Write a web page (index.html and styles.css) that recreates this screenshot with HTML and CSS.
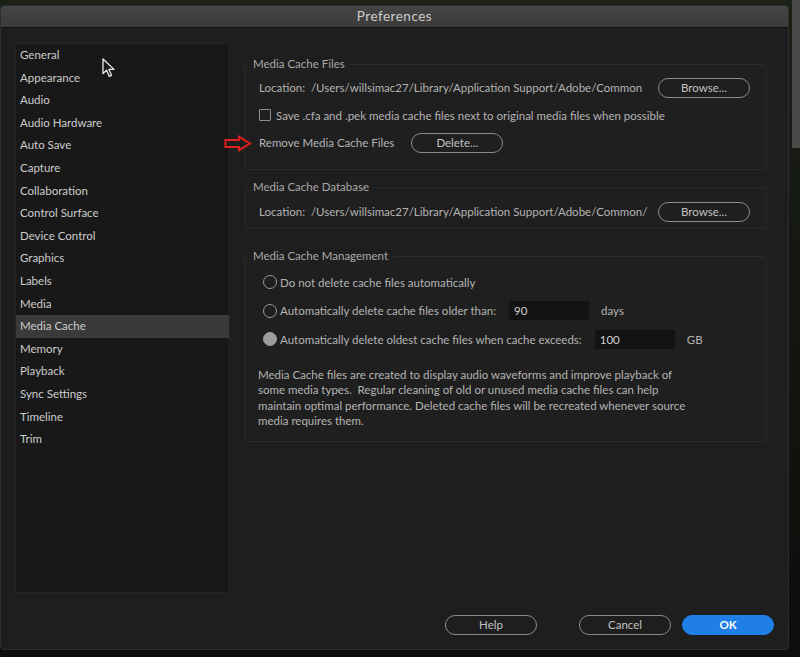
FILE: index.html
```html
<!DOCTYPE html>
<html lang="en">
<head>
<meta charset="utf-8">
<title>Preferences</title>
<link rel="stylesheet" href="styles.css">
</head>
<body>
<div class="desktop">
  <div class="window">
    <div class="titlebar">Preferences</div>
    <div class="content">
      <ul class="sidebar">
        <li>General</li>
        <li>Appearance</li>
        <li>Audio</li>
        <li>Audio Hardware</li>
        <li>Auto Save</li>
        <li>Capture</li>
        <li>Collaboration</li>
        <li>Control Surface</li>
        <li>Device Control</li>
        <li>Graphics</li>
        <li>Labels</li>
        <li>Media</li>
        <li class="selected">Media Cache</li>
        <li>Memory</li>
        <li>Playback</li>
        <li>Sync Settings</li>
        <li>Timeline</li>
        <li>Trim</li>
      </ul>
      <div class="panel">
        <fieldset class="group group-files">
          <legend>Media Cache Files</legend>
          <div class="row spread">
            <span>Location:&nbsp; /Users/willsimac27/Library/Application Support/Adobe/Common</span>
            <button class="btn">Browse...</button>
          </div>
          <div class="row">
            <span class="checkbox"></span>
            <span>Save .cfa and .pek media cache files next to original media files when possible</span>
          </div>
          <div class="row remove-row">
            <svg class="pointer-arrow" width="28" height="17" viewBox="0 0 28 17">
              <path d="M1.5 5 H15 V1.8 L26 8.5 L15 15.2 V12 H1.5 Z" fill="none" stroke="#e0201c" stroke-width="2" stroke-linejoin="miter"/>
            </svg>
            <span>Remove Media Cache Files</span>
            <button class="btn">Delete...</button>
          </div>
        </fieldset>

        <fieldset class="group group-db">
          <legend>Media Cache Database</legend>
          <div class="row spread">
            <span>Location:&nbsp; /Users/willsimac27/Library/Application Support/Adobe/Common/</span>
            <button class="btn">Browse...</button>
          </div>
        </fieldset>

        <fieldset class="group group-manage">
          <legend>Media Cache Management</legend>
          <div class="row radio-row">
            <span class="radio"></span>
            <span>Do not delete cache files automatically</span>
          </div>
          <div class="row radio-row">
            <span class="radio"></span>
            <span class="opt-label">Automatically delete cache files older than:</span>
            <span class="field days">90</span>
            <span class="unit">days</span>
          </div>
          <div class="row radio-row">
            <span class="radio checked"></span>
            <span class="opt-label">Automatically delete oldest cache files when cache exceeds:</span>
            <span class="field gb">100</span>
            <span class="unit">GB</span>
          </div>
          <p class="note">Media Cache files are created to display audio waveforms and improve playback of<br>some media types.&nbsp; Regular cleaning of old or unused media cache files can help<br>maintain optimal performance. Deleted cache files will be recreated whenever source<br>media requires them.</p>
        </fieldset>
      </div>
    </div>
    <div class="footer">
      <button class="btn">Help</button>
      <button class="btn cancel">Cancel</button>
      <button class="btn primary">OK</button>
    </div>
    <svg class="cursor" width="14" height="20" viewBox="0 0 14 20">
      <path d="M1 1 L1 15.5 L4.6 12.2 L7.3 18.4 L9.6 17.4 L7 11.4 L12 11.4 Z" fill="#1a1a1a" stroke="#e8e8e8" stroke-width="1.3" stroke-linejoin="round"/>
    </svg>
  </div>
</div>
</body>
</html>
```

FILE: styles.css
```css
* {
  box-sizing: border-box;
}

html, body {
  margin: 0;
  padding: 0;
}

body {
  width: 800px;
  height: 657px;
  overflow: hidden;
  font-family: "Lato", "Open Sans", sans-serif;
  font-size: 11.5px;
  color: #b4b4b4;
  background:
    linear-gradient(to bottom, #4a4a4a 0, #4a4a4a 148px, transparent 148px) right top / 8px 657px no-repeat,
    linear-gradient(to bottom, #1c2118 0, #141712 40%, #0c0e0b 100%);
}

.desktop {
  padding-top: 5px;
}

.window {
  position: relative;
  width: 789px;
  height: 645px;
  background: #1e1e1e;
  border: 1px solid #2e2e2e;
  border-radius: 4px;
  display: flex;
  flex-direction: column;
  overflow: hidden;
}

.titlebar {
  height: 22px;
  flex: none;
  background: linear-gradient(#454545, #3b3b3b);
  border-bottom: 1px solid #121212;
  color: #cdcdcd;
  font-size: 13.5px;
  line-height: 21px;
  text-align: center;
  letter-spacing: 0.5px;
}

.content {
  display: flex;
  gap: 14px;
  padding: 15px 21px 0 14px;
}

.sidebar {
  list-style: none;
  margin: 0;
  padding: 0;
  width: 215px;
  height: 550px;
  flex: none;
  background: #181818;
  border: 1px solid #252525;
  color: #cccccc;
  font-size: 11.5px;
}

.sidebar li {
  height: 22.6px;
  line-height: 22.6px;
  padding-left: 4px;
}

.sidebar li.selected {
  background: #3a3a3a;
}

.panel {
  flex: 1;
  min-width: 0;
  display: flex;
  flex-direction: column;
  padding-top: 13px;
}

.group {
  margin: 0;
  min-width: 0;
  padding: 0 16px 0 14px;
  border: 1px solid #2a2a2a;
  border-radius: 2px;
  background: #1f1f1f;
}

.group legend {
  margin-left: -11px;
  padding: 0 5px;
  line-height: 16px;
  color: #a9a9a9;
}

.group-files {
  padding-top: 2px;
  padding-bottom: 12.5px;
}

.group-files .row {
  height: 27.5px;
}

.group-db {
  margin-top: 9px;
  padding-top: 3px;
  padding-bottom: 3px;
}

.group-manage {
  margin-top: 19px;
  padding-top: 4px;
  padding-bottom: 13px;
}

.row {
  height: 27px;
  display: flex;
  align-items: center;
  white-space: nowrap;
}

.row.spread {
  justify-content: space-between;
}

.btn {
  font: inherit;
  color: #c2c2c2;
  background: transparent;
  border: 1.5px solid #8b8b8b;
  border-radius: 10px;
  width: 92px;
  height: 20px;
  padding: 0;
  line-height: 16px;
  flex: none;
}

.checkbox {
  width: 12px;
  height: 12px;
  border: 1.5px solid #8e8e8e;
  border-radius: 1px;
  margin-right: 5px;
  flex: none;
}

.remove-row {
  position: relative;
}

.remove-row .btn {
  margin-left: 17px;
}

.pointer-arrow {
  position: absolute;
  left: -35px;
  top: 6px;
}

.group-manage .radio-row {
  height: 28.5px;
  padding-left: 4px;
}

.radio {
  width: 14px;
  height: 14px;
  border: 1.5px solid #9a9a9a;
  border-radius: 50%;
  margin-right: 3px;
  flex: none;
}

.radio.checked {
  background: #9d9d9d;
  border-color: #9d9d9d;
}

.field {
  width: 80px;
  height: 19px;
  background: #121212;
  color: #d0d0d0;
  line-height: 19px;
  padding-left: 5px;
  margin-left: 13px;
  flex: none;
}

.unit {
  margin-left: 12px;
}

.note {
  margin: 13.5px 0 0 -1px;
  line-height: 15.3px;
  white-space: nowrap;
}

.footer {
  margin-top: 22px;
  display: flex;
  justify-content: flex-end;
  padding-right: 14px;
}

.footer .cancel {
  margin-left: 42px;
}

.footer .primary {
  margin-left: 11px;
  background: #1f7fe6;
  border-color: #1f7fe6;
  color: #ffffff;
  font-weight: 700;
}

.cursor {
  position: absolute;
  left: 101px;
  top: 52px;
}
```
